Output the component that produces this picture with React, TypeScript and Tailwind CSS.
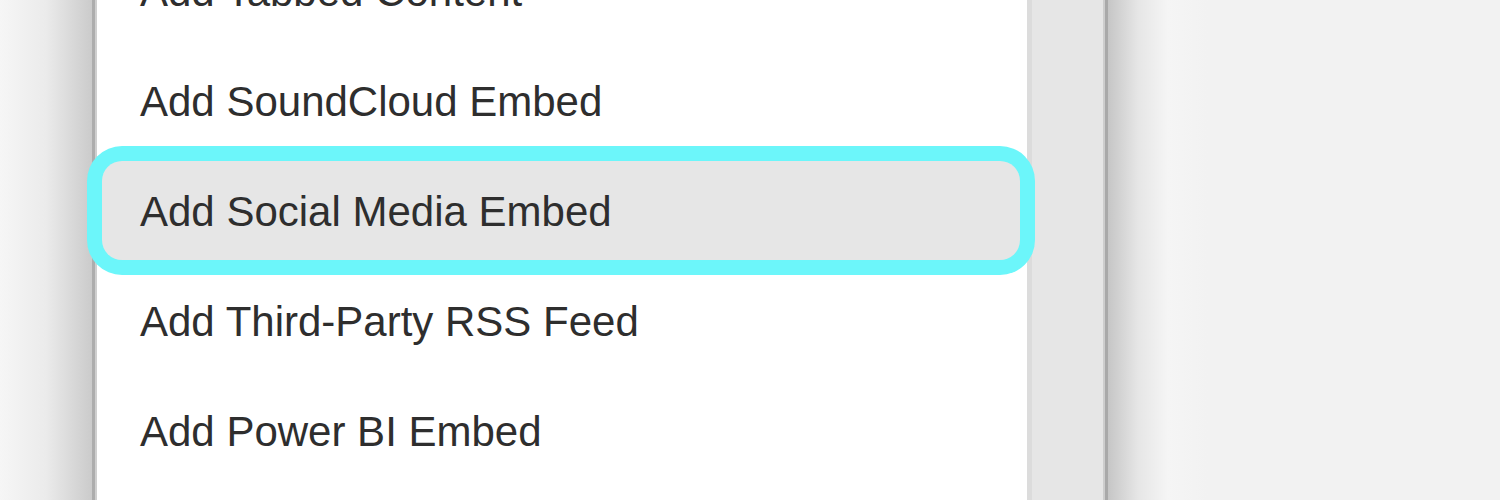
const items = [
  'Add Tabbed Content',
  'Add SoundCloud Embed',
  'Add Social Media Embed',
  'Add Third-Party RSS Feed',
  'Add Power BI Embed',
  '',
];

const ACTIVE = 2;

export default function App() {
  return (
    <div
      className="flex h-[500px] w-[1500px] overflow-hidden bg-[#f2f2f2]"
      style={{ fontFamily: '"Liberation Sans", Arial, sans-serif' }}
    >
      {/* left gutter */}
      <div className="w-[92px] shrink-0 bg-gradient-to-r from-[#f6f6f6] via-[#ebebeb] to-[#cbcbcb]" />
      <div className="w-[3px] shrink-0 bg-[#adadad]" />
      <div className="w-[2px] shrink-0 bg-[#cfcfcf]" />

      {/* menu panel */}
      <div className="relative z-10 w-[930px] shrink-0 bg-white">
        <div className="-mt-[63px] flex flex-col">
          {items.map((label, i) =>
            i === ACTIVE ? (
              <div key={i} className="flex h-[110px] items-start">
                <div className="mt-[4px] mr-[7px] ml-[5px] flex h-[99px] flex-1 items-center rounded-[20px] bg-[#e6e6e6] pl-[38px] ring-[15px] ring-[#6cf6fa]">
                  <span className="pt-[2px] text-[42px] leading-none text-[#2e2e2e]">{label}</span>
                </div>
              </div>
            ) : (
              <div key={i} className="flex h-[110px] items-center pl-[43px]">
                <span className="text-[42px] leading-none text-[#2e2e2e]">{label}</span>
              </div>
            )
          )}
        </div>
      </div>

      {/* scroll strip */}
      <div className="w-[5px] shrink-0 bg-[#dcdcdc]" />
      <div className="w-[71px] shrink-0 bg-[#e6e6e6]" />
      <div className="w-[2px] shrink-0 bg-[#cdcdcd]" />
      <div className="w-[3px] shrink-0 bg-[#a9a9a9]" />

      {/* right backdrop */}
      <div className="w-[60px] shrink-0 bg-gradient-to-r from-[#c6c6c6] via-[#e6e6e6] to-[#f5f5f5]" />
      <div className="w-[40px] shrink-0 bg-gradient-to-r from-[#f5f5f5] to-[#f2f2f2]" />
      <div className="flex-1 bg-[#f2f2f2]" />
    </div>
  );
}
